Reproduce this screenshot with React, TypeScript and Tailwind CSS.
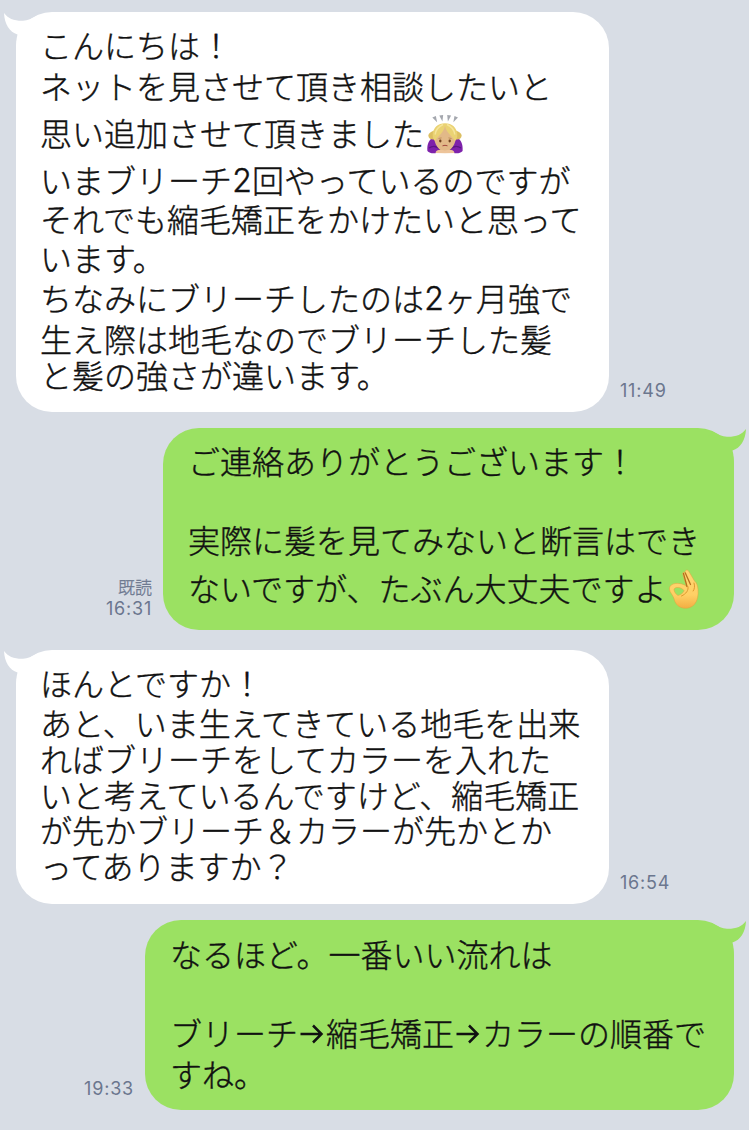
import type { ReactNode } from "react";

function BowEmoji() {
  return (
    <svg role="img" aria-label="🙇🏼‍♀️" viewBox="0 0 46 48" className="-ml-[2px] mt-1 block h-12 w-[46px] shrink-0">
      <g fill="#a4a7ae">
        <path d="M10.300 7.500l3.600-1.500 1.200 6.200z" />
        <path d="M17.300 5.600l3.900-.5-.8 6.400z" />
        <path d="M25.200 5.100l3.900.5-3.200 5.900z" />
        <path d="M32.500 6l3.500 1.500-4.700 4.700z" />
      </g>
      <path d="M5.400 41C4.800 34 7 28.500 13 27h20c6 1.500 8.200 7 7.600 14-2 2.500-6 2.600-9 2H14.400c-3 .6-7 .5-9-2z" fill="#7d22ab" />
      <path d="M7 38c4-3 8-2 12 2M39 38c-4-3-8-2-12 2" fill="none" stroke="#5b1585" strokeWidth="1.200" />
      <path d="M11 21c-2 1.200-4.500 2-4.700 4.500C6.500 28.500 9 30 12 29.500l3-2V20zM35 21c2 1.200 4.500 2 4.700 4.500-.2 3-2.700 4.500-5.700 4L31 27.500V20z" fill="#dcbf62" />
      <path d="M12 26C12 18 17 15 23 15s11 3 11 11c0 8-5 15.500-11 15.500S12 34 12 26z" fill="#e2b988" />
      <path d="M23 13.200c-7 0-12 4.500-12.300 11.300-.1 3 .8 5.500 2.600 6.500 1.200-4.500 8.200-7 9.700-15 1.500 8 8.500 10.500 9.700 15 1.800-1 2.700-3.500 2.600-6.500C35 17.700 30 13.200 23 13.200z" fill="#ead273" />
      <path d="M21 14.500c-4.500 2-7.300 5.500-7.800 10M25 14.500c4.500 2 7.300 5.500 7.800 10" fill="none" stroke="#f5e59b" strokeWidth="1.500" />
      <ellipse cx="18.300" cy="31" rx="1.200" ry="1.400" fill="#70401d" />
      <ellipse cx="27.700" cy="31" rx="1.200" ry="1.400" fill="#70401d" />
      <path d="M16.500 28.500l3-.6M26.500 27.900l3 .6" stroke="#b78547" strokeWidth=".8" />
      <path d="M20.500 35.800q2.500-1 5 0" fill="none" stroke="#a2473e" strokeWidth="1" />
      <path d="M13.500 43c.5-3 4-4 9.500-2.500V43.300zM32.500 43c-.5-3-4-4-9.500-2.500V43.300z" fill="#edc49a" />
    </svg>
  );
}

function OkEmoji() {
  return (
    <svg role="img" aria-label="👌" viewBox="0 0 44 50" className="-ml-[3px] mt-1 block h-[50px] w-11 shrink-0">
      <defs>
        <linearGradient id="hand" x1="0" y1="0" x2="0" y2="1">
          <stop offset="0" stopColor="#ffd573" />
          <stop offset=".65" stopColor="#ffd065" />
          <stop offset="1" stopColor="#f3ae43" />
        </linearGradient>
      </defs>
      <path
        fillRule="evenodd"
        fill="url(#hand)"
        stroke="#e3a03c"
        strokeWidth=".5"
        d="M23 6.300c1.300-.7 2.600.2 3.200 1.700L31.500 17c2.500 2 3.200 5 3.500 8.500.5 5.500-.5 11.500-3.700 15-2.500 2.800-6.300 4.200-10.300 3.700-5-.6-8.500-4-9.700-8.700-.6-2.300-1.700-4-3-6-1.700-2.300-2.500-5-1.300-7 1.500-2.500 5-3.400 8.500-3.100 3.300.2 6 1.200 8.300 3.100L20.500 13c-.6-2-1.200-3.600-.4-4.400.6-.6 1.300-.4 2.100.4-.3-1.200-.1-2.200.8-2.700zM13.500 23.500c-2 .5-3 1.500-2.300 3.300.7 2 2 3.800 3.800 4.700 2.500-.6 5.200-2.500 6.200-4.700-1.500-2.300-4.500-3.800-7.700-3.300z"
      />
      <path d="M20.500 9.500l3.500 13M22.300 9l5.200 11.500" fill="none" stroke="#b5701f" strokeWidth="1.300" strokeLinecap="round" />
      <path d="M25 22.700c.6 3.500-1.500 7-6.500 9.300M31 19c1 3 .6 6-.8 8" fill="none" stroke="#de982f" strokeWidth="1" strokeLinecap="round" />
    </svg>
  );
}

function Two() {
  return <span className="mt-1 inline-block w-5 text-center font-['Inter'] text-[32px] font-light">2</span>;
}

function Arrow() {
  return (
    <svg role="img" aria-label="→" viewBox="0 0 28 24" className="mt-1 block h-6 w-7 shrink-0" fill="none" stroke="currentColor" strokeWidth="2.500">
      <path d="M2.500 12H23.500M15 3.500L23.500 12 15 20.500" />
    </svg>
  );
}

function Line({ h, children }: { h: string; children?: ReactNode }) {
  return <div className={`flex items-center whitespace-nowrap leading-none ${h}`}>{children}</div>;
}

function Bubble({ side, size, children }: { side: "left" | "right"; size: string; children: ReactNode }) {
  const left = side === "left";
  return (
    <div
      className={`relative shrink-0 rounded-[36px] text-[32px] text-[#111] [-webkit-text-stroke:0.4px_#111] ${left ? "bg-white pl-6" : "bg-[#9be162] pl-[25px]"} ${size}`}
    >
      <svg
        viewBox="0 0 48 40"
        className={`absolute top-0 h-10 w-12 ${left ? "-left-4 fill-white" : "-right-4 -scale-x-100 fill-[#9be162]"}`}
      >
        <path d="M4 1C8 6.500 14 9 23 8.800C28 8.500 31 7 38 3.300L44 12V38H16Q16 28 17.500 22.500C9.500 20 4.500 12 4 1Z" />
      </svg>
      <div className="relative">{children}</div>
    </div>
  );
}

function Stamp({ read, time, className }: { read?: boolean; time: string; className: string }) {
  return (
    <div className={`flex flex-col text-[#6b768e] ${className}`}>
      {read && <span className="text-[17px] leading-[22px] [-webkit-text-stroke:0.3px_#6b768e]">既読</span>}
      <span className="font-['Inter'] text-[18px] font-normal leading-[22px] tracking-[0.8px]">{time}</span>
    </div>
  );
}

export default function App() {
  return (
    <main className="flex h-[1130px] w-[749px] flex-col overflow-hidden bg-[#d8dde5] pt-3 font-['Noto_Sans_CJK_JP',sans-serif] font-light">
      <section className="flex items-end pl-4">
        <Bubble side="left" size="h-[400px] w-[593px] pt-3">
          <Line h="h-[40px]">こんにちは！</Line>
          <Line h="h-[42px]">ネットを見させて頂き相談したいと</Line>
          <Line h="h-[52px]">思い追加させて頂きました<BowEmoji /></Line>
          <Line h="h-[42px]">いまブリーチ<Two />回やっているのですが</Line>
          <Line h="h-[36px]">それでも縮毛矯正をかけたいと思って</Line>
          <Line h="h-[41px]">います。</Line>
          <Line h="h-[40px]">ちなみにブリーチしたのは<Two />ヶ月強で</Line>
          <Line h="h-[42px]">生え際は地毛なのでブリーチした髪</Line>
          <Line h="h-[30px]">と髪の強さが違います。</Line>
        </Bubble>
        <Stamp time="11:49" className="mb-[10px] ml-[11px]" />
      </section>

      <section className="mt-4 flex items-end justify-end pr-[15px]">
        <Stamp read time="16:31" className="mr-[11px] mb-[10px] items-end" />
        <Bubble side="right" size="h-[202px] w-[571px] pt-3">
          <Line h="h-[40px]">ご連絡ありがとうございます！</Line>
          <Line h="h-[39px]" />
          <Line h="h-[40px]">実際に髪を見てみないと断言はでき</Line>
          <Line h="h-[56px]">ないですが、たぶん大丈夫ですよ<OkEmoji /></Line>
        </Bubble>
      </section>

      <section className="mt-5 flex items-end pl-4">
        <Bubble side="left" size="h-[254px] w-[593px] pt-3">
          <Line h="h-[40px]">ほんとですか！</Line>
          <Line h="h-[39px]">あと、いま生えてきている地毛を出来</Line>
          <Line h="h-[33px]">ればブリーチをしてカラーを入れた</Line>
          <Line h="h-[39px]">いと考えているんですけど、縮毛矯正</Line>
          <Line h="h-[32px]">が先かブリーチ＆カラーが先かとか</Line>
          <Line h="h-[40px]">ってありますか？</Line>
        </Bubble>
        <Stamp time="16:54" className="mb-[10px] ml-[11px]" />
      </section>

      <section className="mt-4 flex items-end justify-end pr-[15px]">
        <Stamp time="19:33" className="mr-[11px] mb-[10px]" />
        <Bubble side="right" size="h-[190px] w-[589px] pt-[13px]">
          <Line h="h-[40px]">なるほど。一番いい流れは</Line>
          <Line h="h-[39px]" />
          <Line h="h-[40px]">ブリーチ<Arrow />縮毛矯正<Arrow />カラーの順番で</Line>
          <Line h="h-[42px]">すね。</Line>
        </Bubble>
      </section>
    </main>
  );
}
